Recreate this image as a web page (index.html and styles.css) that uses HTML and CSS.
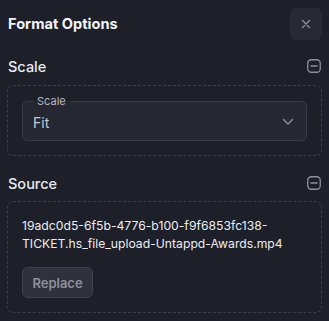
FILE: index.html
```html
<!DOCTYPE html>
<html>
<head>
<meta charset="utf-8">
<link rel="stylesheet" href="styles.css">
</head>
<body>
<div class="panel">
  <div class="header">
    <h1 class="title">Format Options</h1>
    <button class="close" aria-label="Close">
      <svg width="10" height="10" viewBox="0 0 10 10"><path d="M1.5 1.5L8.5 8.5M8.5 1.5L1.5 8.5" stroke="#8e909a" stroke-width="1.4" stroke-linecap="round"/></svg>
    </button>
  </div>

  <div class="section">
    <div class="section-head">
      <h2 class="section-title">Scale</h2>
      <svg class="collapse" width="14" height="14" viewBox="0 0 14 14"><rect x="0.75" y="0.75" width="12.5" height="12.5" rx="3.5" fill="none" stroke="#8e909a" stroke-width="1.3"/><path d="M4 7H10" stroke="#8e909a" stroke-width="1.4" stroke-linecap="round"/></svg>
    </div>
    <div class="box">
      <div class="select">
        <span class="select-label">Scale</span>
        <span class="select-value">Fit</span>
        <svg width="12" height="8" viewBox="0 0 12 8"><path d="M1.5 1.5L6 6L10.5 1.5" fill="none" stroke="#8e909a" stroke-width="1.4" stroke-linecap="round" stroke-linejoin="round"/></svg>
      </div>
    </div>
  </div>

  <div class="section second">
    <div class="section-head">
      <h2 class="section-title">Source</h2>
      <svg class="collapse" width="14" height="14" viewBox="0 0 14 14"><rect x="0.75" y="0.75" width="12.5" height="12.5" rx="3.5" fill="none" stroke="#8e909a" stroke-width="1.3"/><path d="M4 7H10" stroke="#8e909a" stroke-width="1.4" stroke-linecap="round"/></svg>
    </div>
    <div class="box source-box">
      <p class="filename">19adc0d5-6f5b-4776-b100-f9f6853fc138-TICKET.hs_file_upload-Untappd-Awards.mp4</p>
      <button class="replace">Replace</button>
    </div>
  </div>
</div>
</body>
</html>
```

FILE: styles.css
```css
html, body {
  margin: 0;
  padding: 0;
  background: #1d1f29;
  font-family: Inter, "Noto Sans", sans-serif;
  color: #e4e5ea;
}
.panel {
  width: 329px;
  height: 321px;
  box-sizing: border-box;
  padding: 8px 7px 0 8px;
  display: flex;
  flex-direction: column;
}
.header {
  display: flex;
  justify-content: space-between;
  align-items: center;
  height: 32px;
}
.title {
  margin: 0;
  font-size: 14.6px;
  font-weight: 700;
  color: #f2f3f6;
}
.close {
  width: 32px;
  height: 32px;
  border: none;
  border-radius: 6px;
  background: #272935;
  display: flex;
  align-items: center;
  justify-content: center;
  padding: 0;
}
.section {
  display: flex;
  flex-direction: column;
}
.section-head {
  display: flex;
  justify-content: space-between;
  align-items: center;
  height: 20px;
  margin-top: 16px;
  margin-bottom: 9px;
  padding-right: 1px;
}
.second .section-head {
  margin-top: 17px;
  margin-bottom: 8px;
}
.section-title {
  margin: 0;
  font-size: 14.5px;
  font-weight: 500;
  color: #e8e9ee;
}
.box {
  border: 1px dashed #3c3e4a;
  border-radius: 6px;
  margin-left: -1px;
  padding: 15px 14px 14px 14px;
}
.select {
  position: relative;
  height: 40px;
  box-sizing: border-box;
  border: 1px solid #393b47;
  border-radius: 5px;
  background: #252733;
  display: flex;
  align-items: center;
  justify-content: space-between;
  padding: 2px 12px 0 10px;
}
.select-label {
  position: absolute;
  top: -7px;
  left: 10px;
  padding: 0 4px;
  font-size: 11px;
  line-height: 12px;
  color: #b6b8c1;
  background: linear-gradient(#1d1f29 50%, #252733 50%);
}
.select-value {
  font-size: 14px;
  color: #c8cad2;
}
.source-box {
  padding: 15px 14px 14px 14px;
}
.filename {
  margin: 0;
  font-size: 12.2px;
  line-height: 18px;
  color: #eceef2;
  overflow-wrap: anywhere;
}
.replace {
  margin-top: 14px;
  width: 71px;
  height: 31px;
  border: 1px solid #3f414c;
  border-radius: 6px;
  background: #2f313c;
  color: #8e909b;
  font-family: Inter, "Noto Sans", sans-serif;
  font-size: 13px;
  font-weight: 600;
  padding: 0;
}
```
